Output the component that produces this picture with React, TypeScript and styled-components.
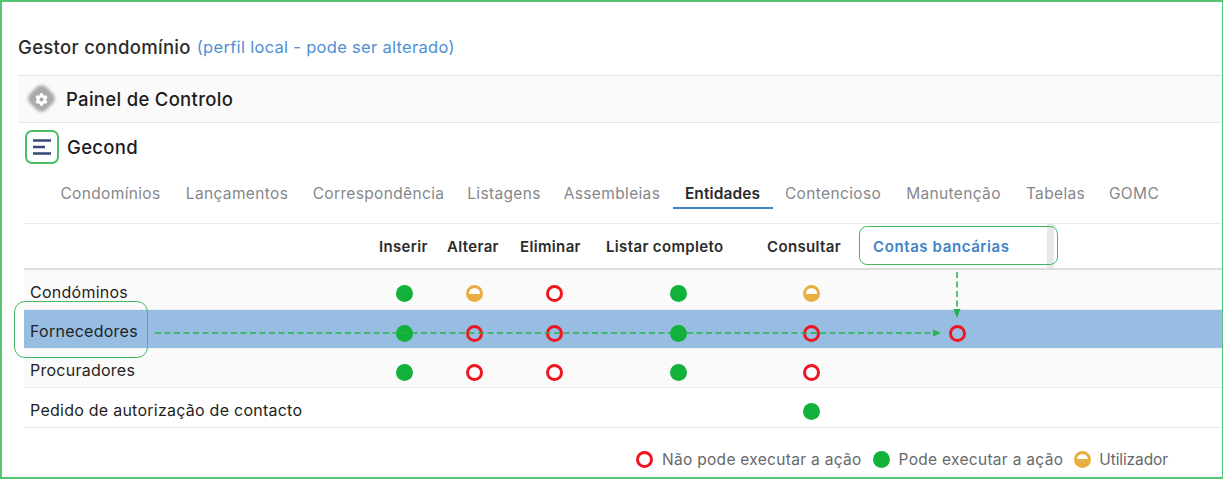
import React from "react";
import styled, { createGlobalStyle } from "styled-components";
import { FaCog } from "react-icons/fa";

const Global = createGlobalStyle`
  html, body { margin: 0; padding: 0; background: #fff; }
  body { font-family: Inter, "Noto Sans", "Liberation Sans", sans-serif; color: #222; }
`;

const TEMPLATE = "343px 74px 66px 94px 154px 112px 180px 7px 1fr";

const Frame = styled.div`
  position: relative;
  width: 1223px;
  height: 479px;
  box-sizing: border-box;
  border: 2px solid #55c671;
  border-right-width: 1px;
  padding-left: 16px;
  overflow: hidden;
`;
const Title = styled.div`
  height: 73px;
  box-sizing: border-box;
  padding-top: 17px;
  display: flex;
  align-items: center;
  gap: 6px;
  font-size: 18.5px;
  font-weight: 500;
  letter-spacing: 0.3px;
  color: #2b2b2b;
`;
const Note = styled.span`
  font-size: 16.5px;
  font-weight: 400;
  color: #4f8fd2;
  letter-spacing: 0.3px;
`;
const AppRow = styled.div<{ $shaded?: boolean }>`
  height: ${(p) => (p.$shaded ? 48 : 47)}px;
  box-sizing: border-box;
  display: flex;
  align-items: center;
  gap: 8px;
  padding-left: 8px;
  background: ${(p) => (p.$shaded ? "#fafafa" : "#fff")};
  border-top: ${(p) => (p.$shaded ? "1px solid #e2e2e2" : "none")};
  border-bottom: ${(p) => (p.$shaded ? "1px solid #e6e6e6" : "none")};
  font-size: 18.5px;
  font-weight: 500;
  letter-spacing: 0.3px;
  color: #1d1d1f;
`;
const GearBlob = styled.span`
  position: relative;
  width: 33px;
  height: 30px;
  margin-left: -1px;
  display: flex;
  align-items: center;
  justify-content: center;
  color: #fff;
  font-size: 13px;
  &::before {
    content: "";
    position: absolute;
    left: 5px;
    top: 3px;
    width: 23px;
    height: 23px;
    border-radius: 7px;
    background: #a9a9a9;
    transform: rotate(45deg);
    filter: blur(1.5px);
  }
  svg { position: relative; }
`;
const MenuBox = styled.span`
  width: 34px;
  height: 34px;
  margin-left: -1px;
  box-sizing: border-box;
  border: 2px solid #4cbe68;
  border-radius: 7px;
  display: flex;
  align-items: center;
  justify-content: center;
  svg { display: block; }
`;
const Tabs = styled.nav`
  display: flex;
  margin: 2px 0 0 29.5px;
`;
const Tab = styled.div<{ $active?: boolean; $w: number }>`
  width: ${(p) => p.$w}px;
  height: 37px;
  box-sizing: border-box;
  padding-top: 7px;
  display: flex;
  align-items: center;
  justify-content: center;
  white-space: nowrap;
  font-size: 15.5px;
  font-weight: ${(p) => (p.$active ? 600 : 400)};
  letter-spacing: ${(p) => (p.$active ? "0.1px" : "0.35px")};
  color: ${(p) => (p.$active ? "#2a2a2a" : "#85878b")};
  border-bottom: 2px solid ${(p) => (p.$active ? "#3f83c8" : "transparent")};
`;
const Table = styled.div`
  margin: 14px 0 0 6px;
`;
const HeaderRow = styled.div`
  height: 47px;
  box-sizing: border-box;
  display: grid;
  grid-template-columns: ${TEMPLATE};
  border-top: 1px solid #ececec;
  border-bottom: 2px solid #dcdcdc;
`;
const Head = styled.div<{ $inset: number; $link?: boolean }>`
  display: flex;
  align-items: center;
  padding-left: ${(p) => p.$inset}px;
  white-space: nowrap;
  font-size: 15px;
  font-weight: 600;
  letter-spacing: ${(p) => (p.$link ? "0.6px" : "0.35px")};
  color: ${(p) => (p.$link ? "#3f83c8" : "#2c2c2c")};
`;
const Strip = styled.div`
  background: #e8e8e8;
`;
const Row = styled.div<{ $tone: "plain" | "shade" | "selected"; $h: number }>`
  height: ${(p) => p.$h}px;
  box-sizing: border-box;
  padding-top: 8px;
  display: grid;
  grid-template-columns: ${TEMPLATE};
  align-items: center;
  background: ${(p) =>
    p.$tone === "selected" ? "#97bde2" : p.$tone === "shade" ? "#fafafa" : "#fff"};
  border-bottom: 1px solid ${(p) => (p.$tone === "selected" ? "#f0f4f8" : "#ececec")};
`;
const Name = styled.div`
  padding: 0 0 4px 6px;
  white-space: nowrap;
  font-size: 16px;
  letter-spacing: 0.25px;
  color: #1f1f22;
`;
const Cell = styled.div`
  display: flex;
  justify-content: center;
  align-items: center;
`;
const Mark = styled.span<{ $kind: "yes" | "no" | "user" }>`
  display: block;
  width: 17px;
  height: 17px;
  box-sizing: border-box;
  border-radius: 50%;
  ${(p) =>
    p.$kind === "yes"
      ? "background:#12b13a;"
      : p.$kind === "no"
      ? "border:3px solid #f0151f;"
      : "border:3px solid #e9ae42;background:linear-gradient(#fff 0 50%,#e9ae42 50%);"}
`;
const WhiteMark = styled(Mark)`
  background: #fff;
`;
const Legend = styled.div`
  margin-top: 22px;
  padding-right: 54px;
  display: flex;
  justify-content: flex-end;
  align-items: center;
  font-size: 15.5px;
  letter-spacing: 0.3px;
  color: #66686c;
`;
const LegendItem = styled.div`
  display: flex;
  align-items: center;
  gap: 9px;
  margin-left: 11px;
  white-space: nowrap;
  &:last-child { letter-spacing: -0.1px; gap: 8px; }
`;
const Callout = styled.div<{ $x: number; $y: number; $w: number; $h: number; $r: number }>`
  position: absolute;
  left: ${(p) => p.$x - 2}px;
  top: ${(p) => p.$y - 2}px;
  width: ${(p) => p.$w}px;
  height: ${(p) => p.$h}px;
  box-sizing: border-box;
  border: 1.5px solid #45b862;
  border-radius: ${(p) => p.$r}px;
`;
const Arrows = styled.svg`
  position: absolute;
  left: -2px;
  top: -2px;
  pointer-events: none;
`;

type K = "yes" | "no" | "user" | null;
const rows: { name: string; tone: "plain" | "shade" | "selected"; h: number; marks: K[] }[] = [
  { name: "Condóminos", tone: "shade", h: 40, marks: ["yes", "user", "no", "yes", "user", null] },
  { name: "Fornecedores", tone: "selected", h: 39, marks: ["yes", "no", "no", "yes", "no", "no"] },
  { name: "Procuradores", tone: "shade", h: 39, marks: ["yes", "no", "no", "yes", "no", null] },
  { name: "Pedido de autorização de contacto", tone: "plain", h: 40, marks: [null, null, null, null, "yes", null] },
];
const heads = [
  { t: "Inserir", i: 12 },
  { t: "Alterar", i: 6 },
  { t: "Eliminar", i: 13 },
  { t: "Listar completo", i: 5 },
  { t: "Consultar", i: 12 },
];
const tabs = [
  { t: "Condomínios", w: 126 },
  { t: "Lançamentos", w: 127 },
  { t: "Correspondência", w: 156 },
  { t: "Listagens", w: 95 },
  { t: "Assembleias", w: 121 },
  { t: "Entidades", w: 100 },
  { t: "Contencioso", w: 121 },
  { t: "Manutenção", w: 120 },
  { t: "Tabelas", w: 84 },
  { t: "GOMC", w: 73 },
];

export default function App() {
  return (
    <>
      <Global />
      <Frame>
        <Title>
          Gestor condomínio <Note>(perfil local - pode ser alterado)</Note>
        </Title>
        <AppRow $shaded>
          <GearBlob><FaCog /></GearBlob>
          Painel de Controlo
        </AppRow>
        <AppRow>
          <MenuBox>
            <svg width="20" height="18" viewBox="0 0 20 18">
              <path d="M1 2.5H19M1 9H13M1 15.5H19" stroke="#34497a" strokeWidth="2.4" fill="none" />
            </svg>
          </MenuBox>
          Gecond
        </AppRow>
        <Tabs>
          {tabs.map((t) => (
            <Tab key={t.t} $w={t.w} $active={t.t === "Entidades"}>{t.t}</Tab>
          ))}
        </Tabs>
        <Table>
          <HeaderRow>
            <div />
            {heads.map((h) => (
              <Head key={h.t} $inset={h.i}>{h.t}</Head>
            ))}
            <Head $inset={6} $link>Contas bancárias</Head>
            <Strip />
          </HeaderRow>
          {rows.map((r) => (
            <Row key={r.name} $tone={r.tone} $h={r.h}>
              <Name>{r.name}</Name>
              {r.marks.map((m, i) => (
                <Cell key={i}>
                  {m &&
                    (m === "no" && r.tone !== "selected" ? (
                      <WhiteMark $kind="no" />
                    ) : (
                      <Mark $kind={m} />
                    ))}
                </Cell>
              ))}
            </Row>
          ))}
        </Table>
        <Legend>
          <LegendItem><Mark $kind="no" />Não pode executar a ação</LegendItem>
          <LegendItem><Mark $kind="yes" />Pode executar a ação</LegendItem>
          <LegendItem><Mark $kind="user" />Utilizador</LegendItem>
        </Legend>
        <Callout $x={14} $y={301} $w={134} $h={57} $r={11} />
        <Callout $x={859} $y={226} $w={199} $h={39} $r={8} />
        <Arrows width="1223" height="480" viewBox="0 0 1223 480">
          <g stroke="#27b24a" strokeWidth="1.5" strokeDasharray="6 3.5" fill="none">
            <path d="M155 333H934" />
            <path d="M957 272V310" />
          </g>
          <path d="M941 333L933 329.5V336.5Z M957 318L953.5 309H960.5Z" fill="#27b24a" />
        </Arrows>
      </Frame>
    </>
  );
}
